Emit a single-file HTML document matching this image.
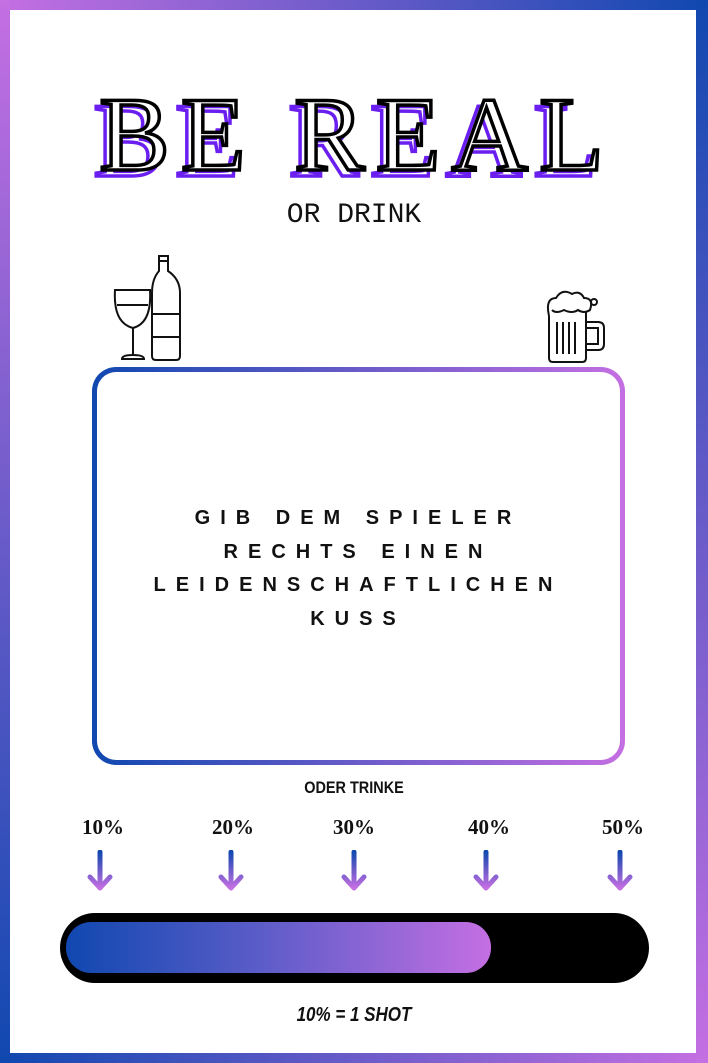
<!DOCTYPE html>
<html><head><meta charset="utf-8"><style>
*{margin:0;padding:0;box-sizing:border-box}
body{width:708px;height:1063px;position:relative;background:#fff;overflow:hidden;font-family:"Liberation Sans",sans-serif}
.b{position:absolute}
.t{position:absolute;left:0;width:708px;text-align:center}
</style></head><body>
<div class="b" style="left:0;top:0;width:708px;height:10px;background:linear-gradient(90deg,#c46fe2,#1048b0)"></div>
<div class="b" style="left:0;bottom:0;width:708px;height:10px;background:linear-gradient(90deg,#1048b0,#c46fe2)"></div>
<div class="b" style="left:0;top:0;width:10px;height:1063px;background:linear-gradient(180deg,#c46fe2,#1048b0)"></div>
<div class="b" style="right:0;top:0;width:12px;height:1063px;background:linear-gradient(180deg,#1048b0,#c46fe2)"></div>

<div class="t" style="top:80px;left:-3px;font-family:'Liberation Serif',serif;font-size:106px;letter-spacing:11px;color:#fff;-webkit-text-stroke:3.5px #6a1ff0">BE REAL</div>
<div class="t" style="top:74px;left:3px;font-family:'Liberation Serif',serif;font-size:106px;letter-spacing:11px;color:#fff;-webkit-text-stroke:3.5px #000">BE REAL</div>
<div class="t" style="top:200px;font-family:'Liberation Mono',monospace;font-size:28px;color:#111">OR DRINK</div>

<svg class="b" style="left:110px;top:253px" width="76" height="110" viewBox="0 0 76 110" fill="none" stroke="#111" stroke-width="2">
<path d="M5 37 H40 Q42 70 23 75 Q3 70 5 37Z"/><path d="M7 52 H38"/><path d="M23 75 V103 M12 106 H34 Q34 102 23 102 Q12 102 12 106Z"/>
<path d="M49 3 H58 V18 Q70 26 70 40 V103 Q70 107 66 107 H46 Q42 107 42 103 V40 Q42 26 49 18Z M48 8 H59"/><path d="M42 61 H70 M42 84 H70"/>
</svg>
<svg class="b" style="left:542px;top:288px" width="70" height="78" viewBox="0 0 70 78" fill="none" stroke="#111" stroke-width="2">
<path d="M7 28 Q3 10 14 10 Q20 0 30 6 Q38 2 42 10 Q52 10 48 22 Q42 26 36 22 Q30 26 22 22 Q14 26 10 22"/><circle cx="52" cy="14" r="3"/>
<path d="M7 28 V70 Q7 74 11 74 H40 Q44 74 44 70 V24 M44 34 H56 Q62 34 62 40 V56 Q62 62 56 62 H44 M44 40 H56 V56 H44"/>
<path d="M15 34 V66 M21 34 V66 M27 34 V66 M33 34 V66"/>
</svg>

<div class="b" style="left:92px;top:367px;width:533px;height:398px;border-radius:24px;padding:5px;background:linear-gradient(90deg,#1048b0,#c46fe2)"><div style="width:100%;height:100%;background:#fff;border-radius:19px"></div></div>
<div class="t" style="top:502px;left:4px;font-size:20px;font-weight:900;line-height:33.5px;letter-spacing:10px;color:#111">GIB DEM SPIELER<br>RECHTS EINEN<br>LEIDENSCHAFTLICHEN<br>KUSS</div>

<div class="t" style="top:778px;font-size:17px;font-weight:900;color:#111;transform:scaleX(.85)">ODER TRINKE</div>
<div style="position:absolute;top:815px;left:0;width:708px;font-family:'Liberation Serif',serif;font-size:21px;color:#111;font-weight:bold">
<span class="b" style="left:82px">10%</span><span class="b" style="left:212px">20%</span><span class="b" style="left:333px">30%</span><span class="b" style="left:468px">40%</span><span class="b" style="left:602px">50%</span></div>
<svg width="0" height="0"><defs><linearGradient id="g" x1="0" y1="0" x2="0" y2="1"><stop offset="0" stop-color="#1048b0"/><stop offset="1" stop-color="#c46fe2"/></linearGradient></defs></svg>
<svg class="b" style="left:86px;top:850px" width="560" height="44"><g fill="none" stroke="url(#g)" stroke-width="5" stroke-linecap="round" stroke-linejoin="round">
<path d="M14 2 V38 M4 27 L14 38 L24 27"/><path d="M145 2 V38 M135 27 L145 38 L155 27"/><path d="M268 2 V38 M258 27 L268 38 L278 27"/><path d="M400 2 V38 M390 27 L400 38 L410 27"/><path d="M534 2 V38 M524 27 L534 38 L544 27"/></g></svg>

<div class="b" style="left:60px;top:913px;width:589px;height:70px;border-radius:35px;background:#000"></div>
<div class="b" style="left:66px;top:922px;width:425px;height:51px;border-radius:25px;background:linear-gradient(90deg,#1048b0,#5a5cc8 45%,#c46fe2)"></div>
<div class="t" style="top:1004px;font-size:20px;font-weight:900;font-style:italic;color:#111;transform:scaleX(.85)">10% = 1 SHOT</div>
</body></html>
